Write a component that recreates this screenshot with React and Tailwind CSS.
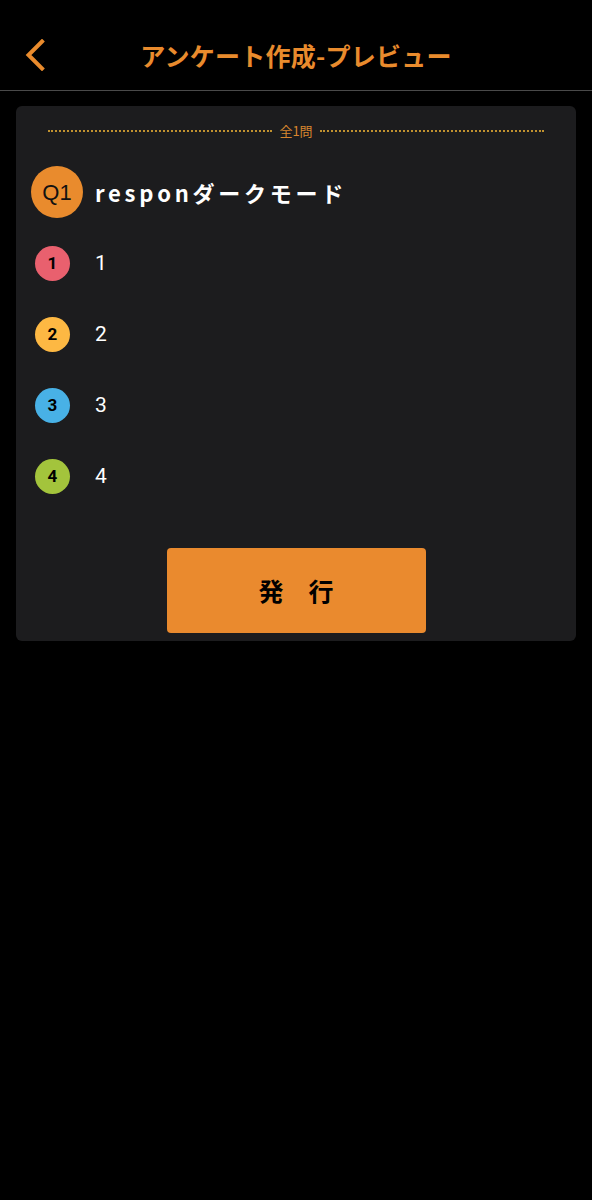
import React from "react";

const options = [
  { n: 1, label: "1", color: "bg-[#e9606e]" },
  { n: 2, label: "2", color: "bg-[#fdb843]" },
  { n: 3, label: "3", color: "bg-[#48b1e6]" },
  { n: 4, label: "4", color: "bg-[#a3c43c]" },
];

function Chevron() {
  return (
    <svg width="20" height="32" viewBox="0 0 20 32" fill="none">
      <path d="M17 2.5 L3.5 16 L17 29.5" stroke="#e98b2d" strokeWidth="4" strokeLinecap="square" />
    </svg>
  );
}

export default function App() {
  return (
    <div className="min-h-[1200px] bg-black font-['Noto_Sans','Noto_Sans_CJK_JP',sans-serif]">
      {/* header */}
      <div className="h-[91px] border-b border-[#4a4a4a] pt-[20px] grid grid-cols-[70px_1fr_70px] items-center">
        <div className="pl-[25px] flex items-center">
          <Chevron />
        </div>
        <div className="text-center text-[25px] font-semibold text-[#e98b2d] leading-[30px] tracking-[0.01em] font-['Noto_Sans_CJK_JP',sans-serif]">
          アンケート作成-プレビュー
        </div>
        <div />
      </div>

      {/* card */}
      <div className="mx-4 mt-[15px] rounded-md bg-[#1c1c1e] pt-[17px] pb-[8px]">
        <div className="px-8 flex items-center gap-[7px] h-4">
          <div className="flex-1 border-t-2 border-dotted border-[#c0912f]" />
          <span className="text-[13px] leading-4 text-[#d8862e] font-['Noto_Sans_CJK_JP',sans-serif]">全1問</span>
          <div className="flex-1 border-t-2 border-dotted border-[#c0912f]" />
        </div>

        <div className="mt-[27px] pl-[15px] flex items-center gap-[12px]">
          <div className="w-[52px] h-[52px] rounded-full bg-[#e98b2d] flex items-center justify-center text-[22px] text-[#111] font-['Liberation_Sans',sans-serif]">
            Q1
          </div>
          <div className="text-[22px] font-bold text-white tracking-[0.17em] font-['Noto_Sans_CJK_JP',sans-serif]">
            responダークモード
          </div>
        </div>

        <div className="mt-[10px]">
          {options.map((o) => (
            <div key={o.n} className="h-[71px] pl-[19px] flex items-center gap-[25px]">
              <div className={`w-[35px] h-[35px] rounded-full ${o.color} flex items-center justify-center text-[17px] font-bold text-black font-['Roboto',sans-serif]`}>
                {o.n}
              </div>
              <div className="text-[21px] text-white font-['Roboto',sans-serif]">{o.label}</div>
            </div>
          ))}
        </div>

        <div className="mt-[36px] flex justify-center">
          <button className="w-[259px] h-[85px] rounded-[4px] bg-[#ea8a2e] text-black text-[25px] font-bold tracking-[1em] pl-[1em] font-['Noto_Sans_CJK_JP',sans-serif]">
            発行
          </button>
        </div>
      </div>
    </div>
  );
}
